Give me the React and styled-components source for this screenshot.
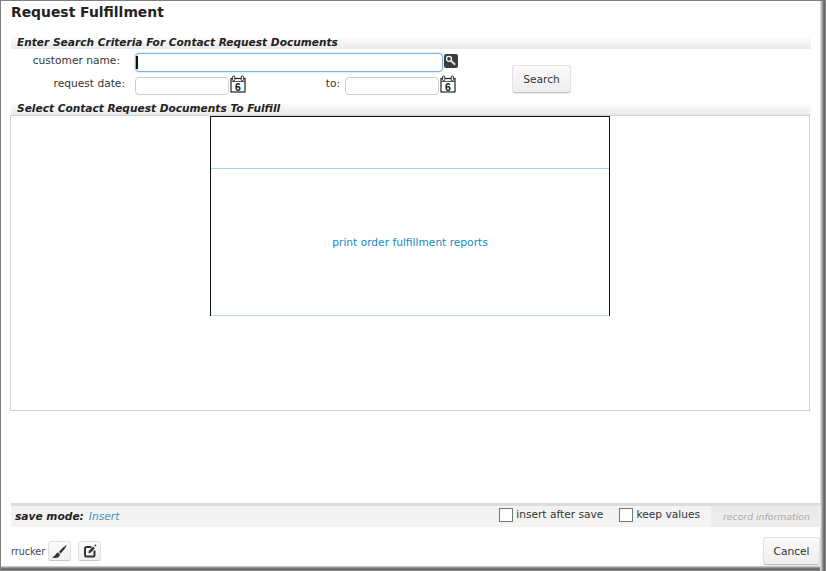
import React from "react";
import styled, { createGlobalStyle } from "styled-components";

const Global = createGlobalStyle`
  html, body { margin: 0; padding: 0; background: #fff; }
  body { font-family: "DejaVu Sans", Verdana, sans-serif; font-size: 10.65px; color: #333; }
`;

const Frame = styled.div`
  width: 826px; height: 571px; box-sizing: border-box;
  display: flex; flex-direction: column;
  border-top: 1px solid #7f7f7f; border-left: 1px solid #7f7f7f;
  box-shadow: inset -1px 0 #8c8c8c, inset -2px 0 #666, inset -3px 0 #777, inset -4px 0 #999, inset -5px 0 #bbb, inset -6px 0 #ddd,
    inset 0 -1px #8c8c8c, inset 0 -2px #666, inset 0 -3px #777, inset 0 -4px #999, inset 0 -5px #c4c4c4;
  overflow: hidden;
`;
const Title = styled.h1`
  margin: 0; padding: 3px 0 0 10px; height: 32px; box-sizing: border-box;
  font-size: 13.9px; line-height: 17px; font-weight: 700; color: #222;
`;
const SectionHeader = styled.div`
  margin: ${p => p.$top || 0}px 15px 0 10px; height: 13px; padding-left: 6px;
  font-size: 10.6px; line-height: 13px; font-weight: 700; font-style: italic; color: #222;
  background: linear-gradient(#ffffff, #e9e9e9);
`;
const Criteria = styled.div`
  height: 53px; margin-right: 15px; display: flex;
`;
const Fields = styled.div`
  width: 511px; padding-top: 4px; display: flex; flex-direction: column; gap: 4px;
`;
const Row = styled.div`
  display: flex; align-items: center; height: 19px;
`;
const Label = styled.label`
  width: ${p => p.$w}px; box-sizing: border-box;
  text-align: right; color: #333; position: relative; top: -2px; flex: none;
`;
const Input = styled.div`
  width: ${p => p.$w}px; height: ${p => p.$focus ? 19 : 18}px; box-sizing: border-box; flex: none;
  margin-left: ${p => p.$ml}px;
  background: #fff; border: 1px solid ${p => p.$focus ? "#74b3ea" : "#ccc"}; border-radius: 4px;
  box-shadow: ${p => p.$focus ? "0 0 2px #9ccbf2" : "none"};
  position: relative;
  ${p => p.$focus ? `&::before { content: ""; position: absolute; left: 0; top: 2px; bottom: 2px; width: 1.5px; background: #111; }` : ""}
`;
const IconSlot = styled.span`
  display: inline-flex; flex: none; margin-left: ${p => p.$ml || 0}px;
  position: relative; top: ${p => p.$top || 0}px;
`;
const ButtonCell = styled.div`
  padding-top: 16px;
`;
const Button = styled.button`
  width: ${p => p.$w}px; height: ${p => p.$h}px; padding: 0;
  border: 1px solid #e2e2e2; border-bottom-color: #c2c2c2; border-radius: 3px;
  background: linear-gradient(#fbfbfb, #eeeeee);
  font: 10.65px "DejaVu Sans", Verdana, sans-serif; color: #333;
  box-shadow: 0 1px 1px rgba(0,0,0,.08);
`;
const Results = styled.div`
  margin: 0 16px 0 9px; height: 296px; box-sizing: border-box;
  border: 1px solid #d0d0d0; display: flex; justify-content: center; align-items: flex-start;
`;
const Report = styled.div`
  width: 400px; height: 200px; box-sizing: border-box;
  border-style: solid; border-width: 1px 1px 0; border-color: #111;
  display: flex; flex-direction: column;
`;
const ReportHead = styled.div`
  height: 51px; border-bottom: 1px solid #9fd6ee;
`;
const ReportBody = styled.div`
  flex: 1; display: flex; align-items: center; justify-content: center;
  color: #0f8bc9; box-shadow: inset 0 -1px #b8d9ea;
`;
const Spacer = styled.div`
  flex: 1;
`;
const SaveBar = styled.div`
  margin: 0 5px 0 10px; height: 21px; display: flex; align-items: center;
  background: #f3f3f3; border-top: 3px solid #dcdcdc;
`;
const SaveLabel = styled.b`
  font-style: italic; margin-left: 4px; color: #222;
`;
const SaveValue = styled.i`
  margin-left: 5px; color: #3a97b8;
`;
const CheckRow = styled.label`
  display: flex; align-items: center; gap: 3px; margin-left: ${p => p.$ml || 0}px; color: #333;
  position: relative; top: -2px;
`;
const Box = styled.span`
  width: 12px; height: 12px; border: 1px solid #777; background: #fff; display: block;
`;
const RecordInfo = styled.div`
  margin-left: 11px; width: 98px; height: 100%; padding-left: 12px; background: #ececec; color: #aaa;
  font-style: italic; font-size: 9.3px; line-height: 21px;
`;
const BottomBar = styled.div`
  height: 28px; margin: 0 6px 0 0; padding: 10px 0 6px 10px; display: flex; align-items: center;
`;
const User = styled.span`
  font-size: 9.6px; color: #444; margin-right: 3px;
`;
const ToolButton = styled.button`
  width: 23px; height: 20px; padding: 0; margin-right: 7px;
  display: flex; align-items: center; justify-content: center;
  border: 1px solid #e2e2e2; border-bottom-color: #c8c8c8; border-radius: 3px;
  background: linear-gradient(#fbfbfb, #efefef);
`;
const CancelButton = styled(Button)`
  margin-left: auto;
`;

const Calendar = () => (
  <svg width="16" height="18" viewBox="0 0 16 18">
    <rect x="1" y="3.5" width="14" height="13.5" fill="#fff" stroke="#222" strokeWidth="1.2" />
    <path d="M1 6.5h14" stroke="#555" strokeWidth="1" />
    <rect x="2.6" y=".8" width="2.2" height="5" rx="1.1" fill="#fff" stroke="#222" strokeWidth=".9" />
    <rect x="11.2" y=".8" width="2.2" height="5" rx="1.1" fill="#fff" stroke="#222" strokeWidth=".9" />
    <text x="8" y="15.5" textAnchor="middle" fontSize="10.5" fontWeight="700" fontFamily="Liberation Sans, sans-serif" fill="#111">6</text>
  </svg>
);
const SearchIcon = () => (
  <svg width="14" height="14" viewBox="0 0 14 14">
    <rect width="14" height="14" rx="2" fill="#3d3d3d" />
    <circle cx="5" cy="4.8" r="2.5" fill="none" stroke="#fff" strokeWidth="1.3" />
    <path d="M7 6.8l4.2 4" stroke="#ddd" strokeWidth="2" />
  </svg>
);
const Brush = () => (
  <svg width="17" height="15" viewBox="0 0 17 15">
    <path d="M16 .6C13 2.6 9.8 5.6 8 8l1.6 1.5C12 7.4 14.6 4 16 .6Z" fill="#333" />
    <path d="M7 8.6C4.6 9 4.8 12.4 1 13.2c3 1.6 7.6.9 8-3Z" fill="#333" />
  </svg>
);
const Edit = () => (
  <svg width="14" height="14" viewBox="0 0 14 14" fill="none">
    <path d="M8.5 3H3.6A1.6 1.6 0 0 0 2 4.6v6.3a1.6 1.6 0 0 0 1.6 1.6h6.3a1.6 1.6 0 0 0 1.6-1.6V6.5" stroke="#333" strokeWidth="2" />
    <path d="M5.4 9.2l.5-2.4L10.2 2.6l1.7 1.7-4.2 4.4Z" fill="#333" />
    <path d="M11.8 .8l1.3 1.3" stroke="#333" strokeWidth="1.3" />
  </svg>
);

export default function App() {
  return (
    <Frame>
      <Global />
      <Title>Request Fulfillment</Title>
      <SectionHeader $top={3}>Enter Search Criteria For Contact Request Documents</SectionHeader>
      <Criteria>
        <Fields>
          <Row>
            <Label $w={119}>customer name:</Label>
            <Input $w={308} $ml={15} $focus />
            <IconSlot $ml={1} $top={-2}><SearchIcon /></IconSlot>
          </Row>
          <Row>
            <Label $w={124}>request date:</Label>
            <Input $w={94} $ml={10} />
            <IconSlot $ml={1} $top={-2}><Calendar /></IconSlot>
            <Label $w={94}>to:</Label>
            <Input $w={94} $ml={5} />
            <IconSlot $ml={1} $top={-2}><Calendar /></IconSlot>
          </Row>
        </Fields>
        <ButtonCell>
          <Button $w={59} $h={28}>Search</Button>
        </ButtonCell>
      </Criteria>
      <SectionHeader>Select Contact Request Documents To Fulfill</SectionHeader>
      <Results>
        <Report>
          <ReportHead />
          <ReportBody>print order fulfillment reports</ReportBody>
        </Report>
      </Results>
      <Spacer />
      <SaveBar>
        <SaveLabel>save mode:</SaveLabel>
        <SaveValue>Insert</SaveValue>
        <Spacer />
        <CheckRow><Box />insert after save</CheckRow>
        <CheckRow $ml={16}><Box />keep values</CheckRow>
        <RecordInfo>record information</RecordInfo>
      </SaveBar>
      <BottomBar>
        <User>rrucker</User>
        <ToolButton><Brush /></ToolButton>
        <ToolButton><Edit /></ToolButton>
        <CancelButton $w={57} $h={28}>Cancel</CancelButton>
      </BottomBar>
    </Frame>
  );
}
